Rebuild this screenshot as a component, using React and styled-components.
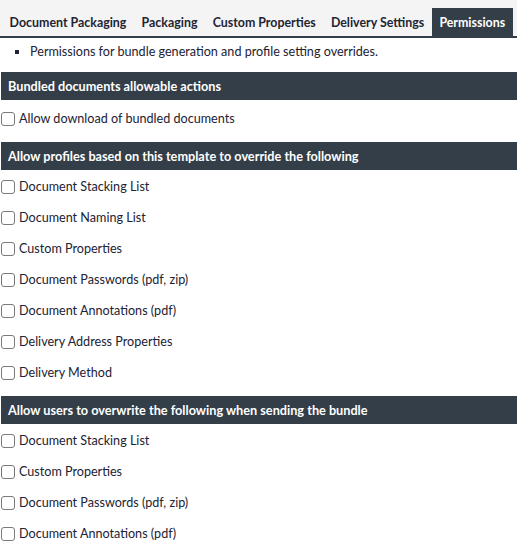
import React from "react"
import styled, { createGlobalStyle } from "styled-components"

const GlobalStyle = createGlobalStyle`
  body {
    margin: 0;
    background: #ffffff;
    font-family: "Lato", "Liberation Sans", sans-serif;
    color: #222233;
  }
`

const Page = styled.div`
  width: 517px;
`

const TabBar = styled.nav`
  display: flex;
  align-items: flex-end;
  height: 36px;
  padding-left: 2px;
  background: #f4f4f4;
  border-bottom: 2px solid #333e48;
`

const Tab = styled.div`
  display: flex;
  align-items: center;
  flex-shrink: 0;
  white-space: nowrap;
  height: 27px;
  padding: 1px 7.6px 0;
  font-size: 12.4px;
  font-weight: 700;
  color: ${p => (p.active ? "#ffffff" : "#1f2433")};
  background: ${p => (p.active ? "#333e48" : "transparent")};
`

const Notes = styled.ul`
  margin: 0;
  padding: 6px 0 0 30px;
  height: 28px;
  list-style: square;
  font-size: 12.6px;
  line-height: 16px;
`

const Body = styled.div`
  padding-left: 1px;
`

const Section = styled.section`
  padding-bottom: 8px;
  &:last-child {
    padding-bottom: 0;
  }
`

const SectionTitle = styled.h3`
  display: flex;
  align-items: center;
  height: 28px;
  margin: 0;
  padding-left: 7px;
  background: #333e48;
  color: #ffffff;
  font-size: 12.7px;
  font-weight: 700;
  white-space: nowrap;
`

const Rows = styled.div`
  padding-top: ${p => (p.first ? 3 : 1)}px;
`

const Row = styled.label`
  display: flex;
  align-items: center;
  gap: 4px;
  height: 31px;
  font-size: 12.6px;
`

const Box = styled.span`
  width: 12px;
  height: 12px;
  border: 1px solid #7a7a7a;
  border-radius: 3px;
  background: #ffffff;
  flex-shrink: 0;
`

const tabs = ["Document Packaging", "Packaging", "Custom Properties", "Delivery Settings", "Permissions"]

const sections = [
  {
    title: "Bundled documents allowable actions",
    items: ["Allow download of bundled documents"],
  },
  {
    title: "Allow profiles based on this template to override the following",
    items: [
      "Document Stacking List",
      "Document Naming List",
      "Custom Properties",
      "Document Passwords (pdf, zip)",
      "Document Annotations (pdf)",
      "Delivery Address Properties",
      "Delivery Method",
    ],
  },
  {
    title: "Allow users to overwrite the following when sending the bundle",
    items: [
      "Document Stacking List",
      "Custom Properties",
      "Document Passwords (pdf, zip)",
      "Document Annotations (pdf)",
    ],
  },
]

const App = () => (
  <Page>
    <GlobalStyle />
    <TabBar>
      {tabs.map(t => (
        <Tab key={t} active={t === "Permissions"}>{t}</Tab>
      ))}
    </TabBar>
    <Notes>
      <li>Permissions for bundle generation and profile setting overrides.</li>
    </Notes>
    <Body>
      {sections.map((s, n) => (
        <Section key={s.title}>
          <SectionTitle>{s.title}</SectionTitle>
          <Rows first={n === 0}>
            {s.items.map(i => (
              <Row key={i}>
                <Box />
                {i}
              </Row>
            ))}
          </Rows>
        </Section>
      ))}
    </Body>
  </Page>
)

export default App
